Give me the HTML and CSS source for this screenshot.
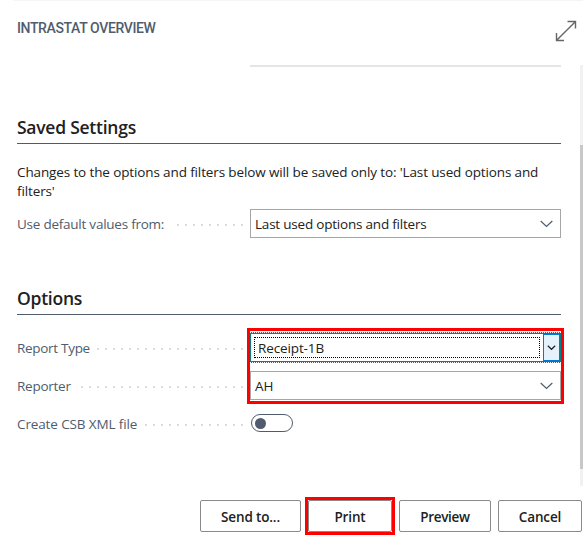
FILE: index.html
```
<!DOCTYPE html>
<html lang="en">
<head>
<meta charset="utf-8">
<title>Intrastat Overview</title>
<link rel="stylesheet" href="styles.css">
</head>
<body>
<main class="dialog">
  <header class="head">
    <h1 class="title">INTRASTAT OVERVIEW</h1>
    <svg class="expand" viewBox="0 0 22 22"><path d="M12.500 1.500h8v7M20.300 1.700L1.700 20.300M1.500 13v7.500H9"/></svg>
  </header>
  <div class="view">
    <div class="content">
      <div class="field-end"></div>
      <section class="saved">
        <h2 class="heading">Saved Settings</h2>
        <p class="note">Changes to the options and filters below will be saved only to: 'Last used options and<br>filters'</p>
        <div class="row">
          <span class="label label-use">Use default values from:</span><i class="dots d9"></i>
          <div class="select"><span class="value value-last">Last used options and filters</span><svg class="chev" viewBox="0 0 13 8"><path d="M.7 1l5.800 5.500L12.300 1"/></svg></div>
        </div>
      </section>
      <section class="options">
        <h2 class="heading">Options</h2>
        <div class="row">
          <span class="label label-type">Report Type</span><i class="dots d19"></i>
          <div class="select focused"><span class="inner">Receipt-1B</span><span class="drop"><svg viewBox="0 0 9 6"><path d="M.8.800l3.700 3.500L8.200.800"/></svg></span></div>
        </div>
        <div class="row">
          <span class="label label-reporter">Reporter</span><i class="dots d21"></i>
          <div class="select"><span class="value">AH</span><svg class="chev" viewBox="0 0 13 8"><path d="M.7 1l5.800 5.500L12.300 1"/></svg></div>
        </div>
        <div class="row">
          <span class="label">Create CSB XML file</span><i class="dots d13"></i>
          <span class="toggle"></span>
        </div>
        <div class="mark mark-fields"></div>
      </section>
    </div>
    <div class="scroll"><div class="thumb"></div></div>
  </div>
  <footer class="actions">
    <button class="btn send">Send to...</button>
    <button class="btn print">Print<span class="mark mark-print"></span></button>
    <button class="btn preview">Preview</button>
    <button class="btn cancel">Cancel</button>
  </footer>
</main>
</body>
</html>
```
FILE: styles.css
```
* { box-sizing: border-box; }
body { margin: 0; background: #fff; color: #212121; font: 13.5px/19px "Open Sans", "Noto Sans", sans-serif; letter-spacing: -.125px; overflow: hidden; }
h1, h2, p { margin: 0; }
.dialog { width: 583px; height: 543px; display: flex; flex-direction: column; }
.head { height: 65px; margin-left: 13px; padding: 18px 6px 0 4px; border-top: 1px solid #f5f5f5; display: flex; justify-content: space-between; align-items: flex-start; }
.title { font: 500 14px/19px Roboto, sans-serif; letter-spacing: -.37px; color: #505c6d; white-space: nowrap; }
.expand { width: 22px; height: 22px; margin-top: 1px; fill: none; stroke: #666; stroke-width: 1.4; }
.view { height: 421px; display: flex; justify-content: space-between; }
.content { width: 544px; padding-left: 17px; margin-right: 17px; box-sizing: content-box; }
.field-end { height: 2px; margin-left: 233px; background: #e5e5e5; }
.saved { padding-top: 47px; }
.heading { height: 30px; border-bottom: 1px solid #505c6d; font-size: 17.5px; line-height: 26px; font-weight: 600; letter-spacing: -.25px; white-space: nowrap; }
.note { padding: 19px 0 8px; white-space: nowrap; }
.row { height: 29px; width: 544px; display: flex; align-items: center; margin-bottom: 9px; }
.label { padding-top: 2px; color: #505c6d; white-space: nowrap; flex: 1; }
.label-use { letter-spacing: -.24px; }
.label-type { letter-spacing: -.3px; }
.label-reporter { letter-spacing: -.25px; }
.value { padding-top: 2px; }
.value-last { letter-spacing: -.21px; }
.dots { height: 2px; margin-right: 7px; margin-top: 3px; background: repeating-linear-gradient(90deg, #dcdcdc 0 2px, transparent 2px 8px); }
.d9 { width: 66px; } .d19 { width: 146px; } .d21 { width: 162px; } .d13 { width: 98px; }
.select { width: 311px; height: 29px; flex: none; border: 1px solid #a6a6a6; padding: 0 7px 0 4px; display: flex; align-items: center; justify-content: space-between; white-space: nowrap; }
.chev { width: 13px; height: 8px; fill: none; stroke: #505c6d; stroke-width: 1.200; }
.focused { border-color: #008089; padding: 0 0 0 3px; outline: 1px dotted #008089; }
.inner { width: 286px; height: 21px; border: 1px dotted #000; padding-left: 3px; line-height: 21px; }
.drop { width: 17px; height: 27px; background: #e5f1fb; border: 1px solid #0078d7; display: flex; align-items: center; justify-content: center; }
.drop svg { width: 9px; height: 6px; fill: none; stroke: #222; stroke-width: 1.200; }
.options { position: relative; padding-top: 47px; width: 544px; }
.saved .row { margin-bottom: 0; }
.options .heading { margin-bottom: 18px; }
.toggle { width: 42px; height: 18px; margin: -1px 268px 0 1px; border: 1px solid #505c6d; border-radius: 9px; padding: 3px; flex: none; }
.toggle::before { content: ""; display: block; width: 11px; height: 11px; border-radius: 50%; background: #505c6d; }
.mark { position: absolute; border: 3px solid #f00; pointer-events: none; }
.mark-fields { left: 230px; top: 90px; width: 317px; height: 76px; }
.scroll { width: 3px; background: #f1f1f1; padding-top: 80px; flex: none; margin-left: -15px; }
.thumb { height: 324px; background: #c8c8c8; }
.actions { display: flex; gap: 7px; padding: 14px 1px 0 200px; }
.btn { position: relative; height: 32px; padding: 2px 0 0; border: 1px solid #8a8a8a; border-radius: 2px; background: #fff; color: #212121; font: 600 13.5px/28px "Open Sans", sans-serif; letter-spacing: -.15px; white-space: nowrap; flex: none; }
.send { width: 101px; } .print { width: 84px; } .preview { width: 92px; letter-spacing: -.3px; } .cancel { width: 84px; }
.mark-print { inset: -4px; }
```
